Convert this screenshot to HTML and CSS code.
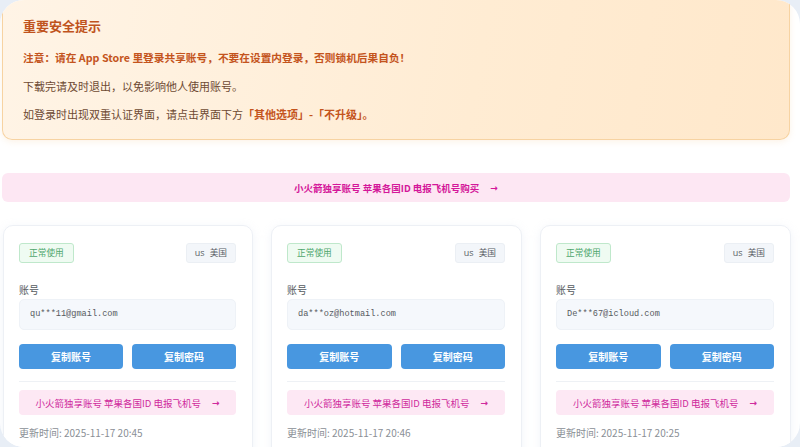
FILE: index.html
```html
<!DOCTYPE html>
<html lang="zh-CN">
<head>
<meta charset="utf-8">
<title>共享账号</title>
<link rel="stylesheet" href="styles.css">
</head>
<body>
<div class="page">
  <section class="notice">
    <h2 class="notice-title">重要安全提示</h2>
    <p class="notice-line strong">注意：请在 App Store 里登录共享账号，不要在设置内登录，否则锁机后果自负！</p>
    <p class="notice-line">下载完请及时退出，以免影响他人使用账号。</p>
    <p class="notice-line">如登录时出现双重认证界面，请点击界面下方<b class="hl">「其他选项」-「不升级」。</b></p>
  </section>

  <a class="banner">小火箭独享账号 苹果各国ID 电报飞机号购买<span class="arrow">→</span></a>

  <div class="cards">
    <div class="card">
      <div class="card-top">
        <span class="status">正常使用</span>
        <span class="region"><span class="cc">us</span>美国</span>
      </div>
      <div class="label">账号</div>
      <div class="field">qu***11@gmail.com</div>
      <div class="btns">
        <button class="btn">复制账号</button>
        <button class="btn">复制密码</button>
      </div>
      <a class="promo">小火箭独享账号 苹果各国ID 电报飞机号<span class="arrow">→</span></a>
      <div class="time">更新时间: 2025-11-17 20:45</div>
    </div>
    <div class="card">
      <div class="card-top">
        <span class="status">正常使用</span>
        <span class="region"><span class="cc">us</span>美国</span>
      </div>
      <div class="label">账号</div>
      <div class="field">da***oz@hotmail.com</div>
      <div class="btns">
        <button class="btn">复制账号</button>
        <button class="btn">复制密码</button>
      </div>
      <a class="promo">小火箭独享账号 苹果各国ID 电报飞机号<span class="arrow">→</span></a>
      <div class="time">更新时间: 2025-11-17 20:46</div>
    </div>
    <div class="card">
      <div class="card-top">
        <span class="status">正常使用</span>
        <span class="region"><span class="cc">us</span>美国</span>
      </div>
      <div class="label">账号</div>
      <div class="field">De***67@icloud.com</div>
      <div class="btns">
        <button class="btn">复制账号</button>
        <button class="btn">复制密码</button>
      </div>
      <a class="promo">小火箭独享账号 苹果各国ID 电报飞机号<span class="arrow">→</span></a>
      <div class="time">更新时间: 2025-11-17 20:25</div>
    </div>
  </div>
</div>
</body>
</html>
```
FILE: styles.css
```css
html, body {
  margin: 0;
  padding: 0;
}
body {
  background: #e8eef6;
  font-family: "Noto Sans CJK SC", "Noto Sans", sans-serif;
  width: 800px;
  height: 447px;
  overflow: hidden;
}
.page {
  width: 800px;
  height: 447px;
  box-sizing: border-box;
  background: #ffffff;
  border-radius: 24px;
  overflow: hidden;
  padding: 0 10px 0 2px;
}
.notice {
  box-sizing: border-box;
  height: 140px;
  padding: 16px 20px 0 20px;
  background: linear-gradient(100deg, #fff4e6 0%, #ffecd3 60%, #ffe8cb 100%);
  border: 1px solid #f7d3a2;
  border-top: none;
  border-radius: 0 0 10px 10px;
  box-shadow: 0 2px 6px rgba(240, 190, 130, 0.18);
}
.notice-title {
  margin: 0;
  font-size: 13px;
  line-height: 20px;
  font-weight: 700;
  color: #c0531d;
}
.notice-line {
  margin: 12px 0 0 0;
  font-size: 11px;
  line-height: 16px;
  color: #6e4a33;
}
.notice-title + .notice-line {
  margin-top: 14px;
}
.notice-line.strong {
  font-weight: 700;
  color: #c4541d;
  font-size: 10.7px;
}
.hl {
  color: #c4541d;
  font-weight: 700;
}
.banner {
  display: flex;
  align-items: center;
  justify-content: center;
  margin-top: 33px;
  height: 29px;
  background: #fde7f3;
  border-radius: 6px;
  font-size: 9.5px;
  font-weight: 700;
  color: #d4179a;
}
.arrow {
  margin-left: 11px;
  font-weight: 700;
  font-family: "DejaVu Sans", sans-serif;
  font-size: 9px;
}
.cards {
  display: grid;
  grid-template-columns: 250px 251px 251px;
  column-gap: 18px;
  margin-top: 23px;
  margin-left: 1px;
}
.card {
  box-sizing: border-box;
  height: 260px;
  padding: 17px 16px 0 15px;
  border: 1px solid #edf0f5;
  border-radius: 10px;
  background: #fff;
  box-shadow: 0 2px 8px rgba(200, 212, 230, 0.25);
}
.card-top {
  display: flex;
  justify-content: space-between;
  align-items: center;
  height: 20px;
}
.status {
  box-sizing: border-box;
  height: 20px;
  line-height: 18px;
  padding: 0 9px;
  background: #effbf2;
  border: 1px solid #bfe8cb;
  border-radius: 3px;
  color: #4ea66c;
  font-size: 8.7px;
}
.region {
  box-sizing: border-box;
  height: 20px;
  line-height: 18px;
  padding: 0 8px;
  background: #f3f6fa;
  border: 1px solid #ebeff4;
  border-radius: 3px;
  color: #5a5f66;
  font-size: 8.7px;
}
.cc {
  margin-right: 5px;
  font-family: "Open Sans", "Noto Sans", sans-serif;
  font-size: 9px;
}
.label {
  margin-top: 20px;
  font-size: 10px;
  line-height: 14px;
  color: #555a60;
}
.field {
  box-sizing: border-box;
  margin-top: 2px;
  height: 31px;
  line-height: 29px;
  padding-left: 10px;
  background: #f5f8fc;
  border: 1px solid #eef2f7;
  border-radius: 5px;
  font-family: "Liberation Mono", monospace;
  font-size: 8.6px;
  color: #555a60;
}
.btns {
  display: grid;
  grid-template-columns: 1fr 1fr;
  column-gap: 9px;
  margin-top: 14px;
}
.btn {
  height: 25px;
  border: none;
  border-radius: 4px;
  background: #4897e0;
  color: #ffffff;
  font-family: "Noto Sans CJK SC", sans-serif;
  font-size: 10px;
  font-weight: 700;
  padding: 0;
}
.promo {
  display: flex;
  align-items: center;
  justify-content: center;
  margin-top: 21px;
  height: 25px;
  position: relative;
  border-radius: 4px;
  background: #fde8f4;
  color: #cf2b9d;
  font-size: 9.5px;
}
.promo::before {
  content: "";
  display: block;
  position: absolute;
  left: 0;
  right: 0;
  top: -9px;
  border-top: 1px solid #eef1f5;
}
.time {
  margin-top: 11px;
  font-size: 10px;
  line-height: 14px;
  color: #8a8f96;
}
```
